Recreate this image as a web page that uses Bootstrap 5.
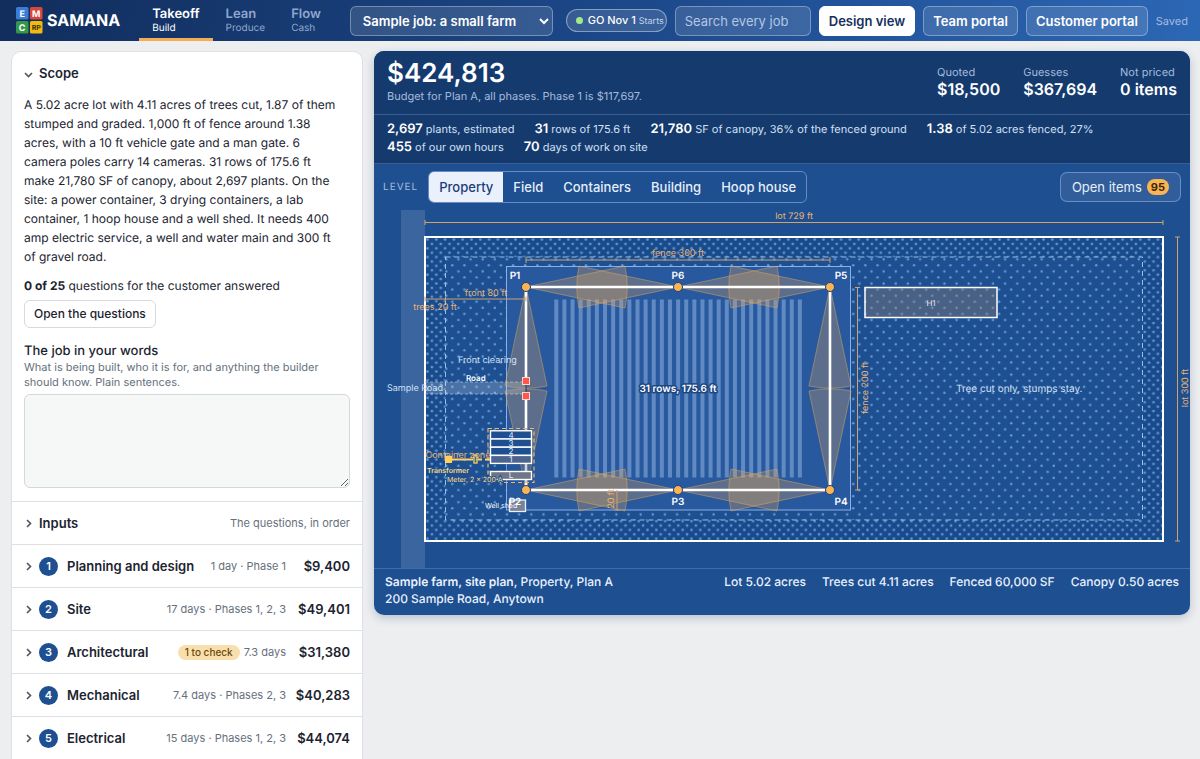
<!DOCTYPE html>
<html lang="en">
<head>
<meta charset="utf-8">
<meta name="viewport" content="width=device-width, initial-scale=1">
<title>Samana Takeoff</title>
<link rel="stylesheet" href="https://cdn.jsdelivr.net/npm/bootstrap@5.3.0/dist/css/bootstrap.min.css">
<style>
:root{--ink:#1b2430;--muted-ink:#66707c;--blue:#1d4f91;--deep:#153a6e;--amber:#fbb454;--rule:#dde1e4}
body{font-family:Inter,"Liberation Sans",sans-serif;font-size:12px;line-height:19px;color:var(--ink);background:#eceef0;height:100vh;overflow:hidden;text-rendering:geometricPrecision}
.topbar{height:41px;background:linear-gradient(100deg,#112d5c 0%,#1d4a8c 55%,#2c67b5 100%);padding:0 12px 0 16px;color:#fff}
.logo-word{font-size:16px;font-weight:700;color:#fff;padding-left:4px}
.modes{margin-left:19px}
.mode{display:flex;flex-direction:column;justify-content:center;height:41px;padding:3px 13px 0;color:#8fa7cd;text-decoration:none;font-size:13px;font-weight:600;line-height:15px;border-bottom:3px solid transparent}
.mode span{font-size:10px;font-weight:400;line-height:12px}
.mode.on{color:#fff;border-color:#f5ac52}
.top-ctl{height:30px;border:1px solid rgba(255,255,255,.32);border-radius:6px;background:rgba(255,255,255,.12);color:#fff;font-size:13px;font-weight:600;white-space:nowrap}
.top-ctl.btn{line-height:20px;padding:0 9px}
.top-ctl.btn.on{background:#fff;color:#14305c;border-color:#fff}
.job-pick{flex:0 1 203px;min-width:120px;padding:0 0 0 8px}
.job-pick option{color:#111}
.find{width:136px;padding:0 9px;font-weight:400}
.find::placeholder{color:#b4c6e4}
.go-pill{height:23px;border:1px solid rgba(255,255,255,.4);border-radius:12px;background:rgba(255,255,255,.12);font-size:11px;font-weight:500;padding:0 2px 0 9px;gap:5px;white-space:nowrap}
.go-pill i{width:7px;height:7px;border-radius:50%;background:#a3e98c;flex:none}
.go-pill small{font-size:9px;font-weight:400;color:#c4d3ec}
.workspace{display:grid;grid-template-columns:352px minmax(0,1fr);gap:11px;padding:10px 10px 0 11px;align-items:start}
.rail{background:#fff;border:1px solid var(--rule);border-radius:10px;padding-bottom:12px}
.rail-body{padding:0 12px 13px}
.scope-text{padding-right:12px}
.asked{padding-top:10px}
.rail-row{display:flex;align-items:center;width:100%;height:43px;padding:0 12px;border:0;border-top:1px solid var(--rule);background:none;text-align:left;color:var(--ink)}
.rail-row.first{border-top:0}
.rail-row b{font-size:13px;font-weight:600}
.rail-row .chev{width:9px;height:9px;margin-right:6px;flex:none;stroke:#4c5560;stroke-width:1.6;fill:none}
.step{width:19px;height:19px;border-radius:50%;background:var(--blue);color:#fff;font-size:11px;font-weight:600;display:flex;align-items:center;justify-content:center;margin-right:9px}
.hint{font-size:11px;line-height:15px;color:var(--muted-ink)}
.rail-row .sum{font-size:13px;font-weight:600;min-width:55px;margin-left:9px;text-align:right}
.chk{background:#f9dfae;color:#6b4a0c;border-radius:8px;font-size:10px;font-weight:500;line-height:15px;padding:0 7px;margin-right:4px}
.ask{height:28px;border:1px solid #d6dadf;border-radius:6px;background:#fff;color:var(--ink);font-size:12px;font-weight:500;padding:0 9px;line-height:18px;margin-top:5px}
.words{font-size:13px;font-weight:500;line-height:17px;padding-top:15px}
.note{height:94px;border:1px solid #d4d8db;border-radius:6px;background:#f6f8f8;display:block;width:100%;margin-top:4px}
.board{background:var(--blue);border-radius:10px;color:#fff;overflow:hidden;box-shadow:0 3px 10px rgba(20,40,80,.22)}
.board-head{background:var(--deep)}
.budget{padding:8px 13px 11px}
.line-b{border-bottom:1px solid rgba(150,185,235,.28)}
.total{font-size:26px;font-weight:600;line-height:30px}
.soft{font-size:11px;color:#a4bbdd;line-height:14px}
.figures{gap:23px;padding-top:6px}
.figure-val{font-size:16px;font-weight:600;line-height:20px}
.facts{column-gap:20px;font-size:11px;line-height:18px;padding:5px 13px 7px;color:#d3e0f4}
.facts b{font-size:13px;line-height:16px;font-weight:600;color:#fff}
.level-bar{padding:7px 9px}
.level{font-size:10px;letter-spacing:1px;color:#a4bbdd;margin-right:10px}
.seg{border:1px solid rgba(160,190,235,.55);border-radius:6px;overflow:hidden;height:32px}
.seg button{border:0;background:none;color:#e6eefb;font-size:13px;font-weight:500;padding:0 10px}
.seg button.on{background:#eaf1fd;color:#1a3f77}
.open-btn{height:30px;border:1px solid rgba(160,190,235,.5);border-radius:7px;background:rgba(255,255,255,.09);color:#e6eefb;font-size:13px;padding:0 11px;display:flex;align-items:center;gap:5px}
.open-btn span{background:var(--amber);color:#3c2704;font-size:11px;font-weight:700;line-height:16px;border-radius:8px;padding:0 4px;min-width:22px}
.plan{display:block;width:100%;height:auto}
.plan .dim{stroke:#cfa36c;stroke-width:1;fill:none}
.plan .dim-t{fill:#e8b473;font-size:9px;text-anchor:middle}
.plan .pole{fill:var(--amber);stroke:#1c4177;stroke-width:1}
.plan .pole-t{fill:#fff;font-size:10px;font-weight:600;text-anchor:middle}
.plan .cone{fill:#f7b055;fill-opacity:.25;stroke:#d9a55c;stroke-opacity:.5;stroke-width:1}
.plan .pale{fill:#d3e1f5;font-size:9px}
.plan .pale .lg{font-size:10px}
.plan .pale .sm{font-size:7px;fill:#fff}
.plan .pale .rd{font-size:8px;font-weight:600;fill:#fff}
.plan .box-t{fill:#e7effb;font-size:8px;text-anchor:middle}
.plan .power-t{fill:#ffdc86;font-size:7px}
.foot{border-top:1px solid rgba(150,185,235,.28);padding:4px 11px 8px;line-height:17px;font-weight:500;color:#e9f1fd}
@media (max-width:991px){body{height:auto;overflow:auto}.topbar{height:auto;flex-wrap:wrap;row-gap:6px}.workspace{grid-template-columns:minmax(0,1fr)}.seg{overflow-x:auto}}
</style>
</head>
<body>
<header class="topbar d-flex align-items-center">
  <svg class="flex-shrink-0" width="27" height="27" viewBox="0 0 27 27" role="img" aria-label="Samana logo">
    <rect width="12.5" height="12.5" rx="1.5" fill="#3b7dd4"/><rect x="14" width="12.5" height="12.5" rx="1.5" fill="#d8473d"/>
    <rect y="14" width="12.5" height="12.5" rx="1.5" fill="#35974b"/><rect x="14" y="14" width="12.5" height="12.5" rx="1.5" fill="#f2b90f"/>
    <g font-weight="700" font-size="9" fill="#fff" text-anchor="middle"><text x="6.2" y="9.5">E</text><text x="20.2" y="9.5">M</text><text x="6.2" y="23.5">C</text><text x="20.2" y="22.7" font-size="7" fill="#3b3005">RP</text></g>
  </svg>
  <div class="logo-word">SAMANA</div>
  <nav class="modes d-flex" aria-label="Mode">
    <a class="mode on" href="#takeoff">Takeoff<span>Build</span></a>
    <a class="mode" href="#lean">Lean<span>Produce</span></a>
    <a class="mode" href="#flow">Flow<span>Cash</span></a>
  </nav>
  <select class="top-ctl job-pick ms-3" aria-label="Job"><option>Sample job: a small farm</option></select>
  <div class="d-flex align-items-center gap-2 ms-auto">
    <div class="go-pill d-flex align-items-center"><i></i><span>GO Nov 1 <small>Starts</small></span></div>
    <input class="top-ctl find" type="search" placeholder="Search every job" aria-label="Search every job">
    <button class="btn top-ctl on" type="button">Design view</button>
    <button class="btn top-ctl" type="button">Team portal</button>
    <button class="btn top-ctl" type="button">Customer portal</button>
    <span class="soft">Saved</span>
  </div>
</header>

<main class="workspace">
  <aside class="rail">
    <button class="rail-row first" type="button"><svg class="chev" viewBox="0 0 9 9"><path d="M1 4l3.500 3.500L8 4"/></svg><b>Scope</b></button>
    <section class="rail-body">
      <p class="scope-text mb-0">A 5.02 acre lot with 4.11 acres of trees cut, 1.87 of them stumped and graded. 1,000 ft of fence around 1.38 acres, with a 10 ft vehicle gate and a man gate. 6 camera poles carry 14 cameras. 31 rows of 175.6 ft make 21,780 SF of canopy, about 2,697 plants. On the site: a power container, 3 drying containers, a lab container, 1 hoop house and a well shed. It needs 400 amp electric service, a well and water main and 300 ft of gravel road.</p>
      <p class="asked mb-0"><strong>0 of 25</strong> questions for the customer answered</p>
      <button class="ask" type="button">Open the questions</button>
      <label class="words d-block" for="job-words">The job in your words</label>
      <div class="hint">What is being built, who it is for, and anything the builder<br>should know. Plain sentences.</div>
      <textarea class="note" id="job-words"></textarea>
    </section>
    <button class="rail-row" type="button"><svg class="chev" viewBox="0 0 9 9"><path d="M3 1l3.500 3.500L3 8"/></svg><b>Inputs</b><span class="hint ms-auto">The questions, in order</span></button>
    <button class="rail-row" type="button"><svg class="chev" viewBox="0 0 9 9"><path d="M3 1l3.500 3.500L3 8"/></svg><span class="step">1</span><b>Planning and design</b><span class="hint ms-auto">1 day · Phase 1</span><span class="sum">$9,400</span></button>
    <button class="rail-row" type="button"><svg class="chev" viewBox="0 0 9 9"><path d="M3 1l3.500 3.500L3 8"/></svg><span class="step">2</span><b>Site</b><span class="hint ms-auto">17 days · Phases 1, 2, 3</span><span class="sum">$49,401</span></button>
    <button class="rail-row" type="button"><svg class="chev" viewBox="0 0 9 9"><path d="M3 1l3.500 3.500L3 8"/></svg><span class="step">3</span><b>Architectural</b><span class="chk ms-auto">1 to check</span><span class="hint">7.3 days</span><span class="sum">$31,380</span></button>
    <button class="rail-row" type="button"><svg class="chev" viewBox="0 0 9 9"><path d="M3 1l3.500 3.500L3 8"/></svg><span class="step">4</span><b>Mechanical</b><span class="hint ms-auto">7.4 days · Phases 2, 3</span><span class="sum">$40,283</span></button>
    <button class="rail-row" type="button"><svg class="chev" viewBox="0 0 9 9"><path d="M3 1l3.500 3.500L3 8"/></svg><span class="step">5</span><b>Electrical</b><span class="hint ms-auto">15 days · Phases 1, 2, 3</span><span class="sum">$44,074</span></button>
  </aside>

  <section class="board">
    <div class="board-head">
      <div class="budget d-flex line-b">
        <div><div class="total">$424,813</div><div class="soft">Budget for Plan A, all phases. Phase 1 is $117,697.</div></div>
        <div class="figures d-flex ms-auto">
          <div><div class="soft">Quoted</div><div class="figure-val">$18,500</div></div>
          <div><div class="soft">Guesses</div><div class="figure-val">$367,694</div></div>
          <div><div class="soft">Not priced</div><div class="figure-val">0 items</div></div>
        </div>
      </div>
      <div class="facts d-flex flex-wrap line-b">
        <span><b>2,697</b> plants, estimated</span><span><b>31</b> rows of 175.6 ft</span><span><b>21,780</b> SF of canopy, 36% of the fenced ground</span><span><b>1.38</b> of 5.02 acres fenced, 27%</span><span><b>455</b> of our own hours</span><span><b>70</b> days of work on site</span>
      </div>
    </div>
    <div class="level-bar d-flex align-items-center">
      <span class="level">LEVEL</span>
      <div class="seg d-flex"><button class="on" type="button">Property</button><button type="button">Field</button><button type="button">Containers</button><button type="button">Building</button><button type="button">Hoop house</button></div>
      <button class="open-btn ms-auto" type="button">Open items <span>95</span></button>
    </div>
    <svg class="plan" viewBox="374 210 816 358" role="img" aria-label="Site plan of the property">
      <defs>
        <pattern id="stumps" width="12.15" height="12.15" patternUnits="userSpaceOnUse" patternTransform="translate(425 237)"><g fill="#639add"><circle cx="3" cy="4" r="1.25"/><circle cx="9.100" cy="10.100" r="1.25"/></g></pattern>
        <pattern id="trees" width="8.8" height="8.8" patternUnits="userSpaceOnUse" patternTransform="translate(425 237)"><g fill="#5f95d8"><circle cx="2.500" cy="2.500" r="1.400"/><circle cx="6.900" cy="6.900" r="1.400"/></g></pattern>
        <path id="cone" d="M0 0L99 -21Q103.500 0 99 21Z"/>
      </defs>
      <rect x="401" y="210" width="24" height="358" fill="#fff" fill-opacity=".13"/>
      <path d="M425 237H1163V541H425ZM445.500 257V520H1143V257Z" fill="#123f7c" fill-opacity=".3"/>
      <path d="M425 237H1163V541H425ZM445.500 257V520H1143V257Z" fill="url(#trees)"/>
      <rect x="445" y="257" width="698" height="263" fill="url(#stumps)"/>
      <rect x="445.500" y="257" width="697" height="263" fill="none" stroke="#9cc0ea" stroke-dasharray="5 4"/>
      <rect x="425" y="237" width="738" height="304" fill="none" stroke="#fff" stroke-width="2"/>
      <rect x="506.500" y="266.500" width="344" height="243.500" fill="#28599f" stroke="#8bb0e4"/>
      <path d="M554.300 388.500H802" stroke="#6189c2" stroke-width="178" stroke-dasharray="4 4.120"/>
      <rect x="425" y="382" width="101" height="12" fill="#fff" fill-opacity=".2"/><path d="M425 382H526M425 394H526" stroke="#a9c4e8" stroke-opacity=".7" stroke-dasharray="3 2"/>
      <g class="cone">
        <use href="#cone" x="526" y="287"/><use href="#cone" x="678" y="287"/><use href="#cone" x="526" y="490"/><use href="#cone" x="678" y="490"/>
        <use href="#cone" transform="translate(678 287) rotate(180)"/><use href="#cone" transform="translate(830 287) rotate(180)"/><use href="#cone" transform="translate(678 490) rotate(180)"/><use href="#cone" transform="translate(830 490) rotate(180)"/>
        <use href="#cone" transform="translate(526 287) rotate(90)"/><use href="#cone" transform="translate(830 287) rotate(90)"/><use href="#cone" transform="translate(526 490) rotate(-90)"/><use href="#cone" transform="translate(830 490) rotate(-90)"/>
      </g>
      <path d="M526 380V287H830V490H526V396" fill="none" stroke="#fff" stroke-width="2.600"/>
      <path d="M526 380V396" stroke="#24364f"/>
      <g class="dim">
        <path d="M425 222.500H1163M425 220v5M1163 220v5M526 260H830M526 257v6M830 257v6M425 299H526M425 296.500v5M445.500 296.500v5M526 296.500v5"/>
        <path d="M857.500 287V490M855 287.500h5M855 490h5M1177.500 237V541M1175 237h5M1175 541h5M617 490V510M614.500 510h5"/>
      </g>
      <g class="dim-t">
        <text x="794" y="219">lot 729 ft</text><text x="678" y="256">fence 300 ft</text><text x="486" y="296">front 80 ft</text><text x="435" y="310">trees 20 ft</text>
        <text transform="translate(868 388) rotate(-90)">fence 200 ft</text><text transform="translate(1188 388) rotate(-90)">lot 300 ft</text><text transform="translate(614 499) rotate(-90)">20 ft</text><text x="458" y="458">Container zone</text>
      </g>
      <rect x="509.500" y="500" width="16" height="11.500" fill="#78839a" stroke="#e8f0fb" stroke-width="1.300"/>
      <rect x="865" y="287.500" width="132" height="30" fill="#8b7d72" fill-opacity=".4" stroke="#fff" stroke-width="1.500"/>
      <rect x="488" y="428.500" width="46" height="54" fill="#1d4f91" fill-opacity=".25" stroke="#f0b367" stroke-width="1.200" stroke-dasharray="4 3"/>
      <g stroke="#fff" stroke-width="1.400"><rect x="490.500" y="430.800" width="41" height="8.200" fill="#1d4f91"/><rect x="490.500" y="439" width="41" height="8.200" fill="#1d4f91"/><rect x="490.500" y="447.200" width="41" height="8.200" fill="#1d4f91"/><rect x="490.500" y="455.400" width="41" height="8" fill="#4b6590"/><rect x="490.500" y="471.500" width="41" height="8" fill="#6e7687"/></g>
      <g class="box-t"><text x="511" y="438">4</text><text x="511" y="446">3</text><text x="511" y="454">2</text><text x="511" y="462">1</text><text x="511" y="478">L</text><text x="931" y="306">H1</text></g>
      <path d="M448 459.500H473M478 459.500H482M485 459.500H490" stroke="#ffd15c" stroke-width="2"/><rect x="445" y="456" width="7" height="7" fill="#ffd15c"/><rect x="474" y="455" width="3" height="8" fill="none" stroke="#ffd15c" stroke-width="1.300"/>
      <g class="power-t" stroke="#1d4f91" stroke-width="2" paint-order="stroke"><text x="427" y="473" font-weight="600">Transformer</text><text x="447" y="482">Meter, 2 × 200 A</text></g>
      <g class="pole"><circle cx="526" cy="287" r="4.500"/><circle cx="678" cy="287" r="4.500"/><circle cx="830" cy="287" r="4.500"/><circle cx="526" cy="490" r="4.500"/><circle cx="678" cy="490" r="4.500"/><circle cx="830" cy="490" r="4.500"/></g>
      <g fill="#ff574c" stroke="#ffd5d0" stroke-width="1"><rect x="522.500" y="377.500" width="7" height="7"/><rect x="522.500" y="392.500" width="7" height="7"/></g>
      <g class="pole-t"><text x="515" y="279">P1</text><text x="678" y="279">P6</text><text x="841" y="279">P5</text><text x="841" y="505">P4</text><text x="678" y="505">P3</text><text x="515" y="505">P2</text>
        <text x="678" y="392" stroke="#1b4680" stroke-width="3" stroke-linejoin="round" paint-order="stroke">31 rows, 175.6 ft</text></g>
      <g class="pale"><text x="458" y="363">Front clearing</text><text x="387" y="391">Sample Road</text><text class="lg" x="956" y="392">Tree cut only, stumps stay.</text><text class="sm" x="485" y="508">Well shed</text><text class="rd" x="466" y="381">Road</text></g>
    </svg>
    <div class="foot d-flex flex-wrap">
      <div><strong class="fw-semibold">Sample farm, site plan</strong>, Property, Plan A<br>200 Sample Road, Anytown</div>
      <div class="d-flex flex-wrap gap-3 ms-auto"><span>Lot 5.02 acres</span><span>Trees cut 4.11 acres</span><span>Fenced 60,000 SF</span><span>Canopy 0.50 acres</span></div>
    </div>
  </section>
</main>
<script src="https://cdn.jsdelivr.net/npm/bootstrap@5.3.0/dist/js/bootstrap.bundle.min.js"></script>
</body>
</html>
